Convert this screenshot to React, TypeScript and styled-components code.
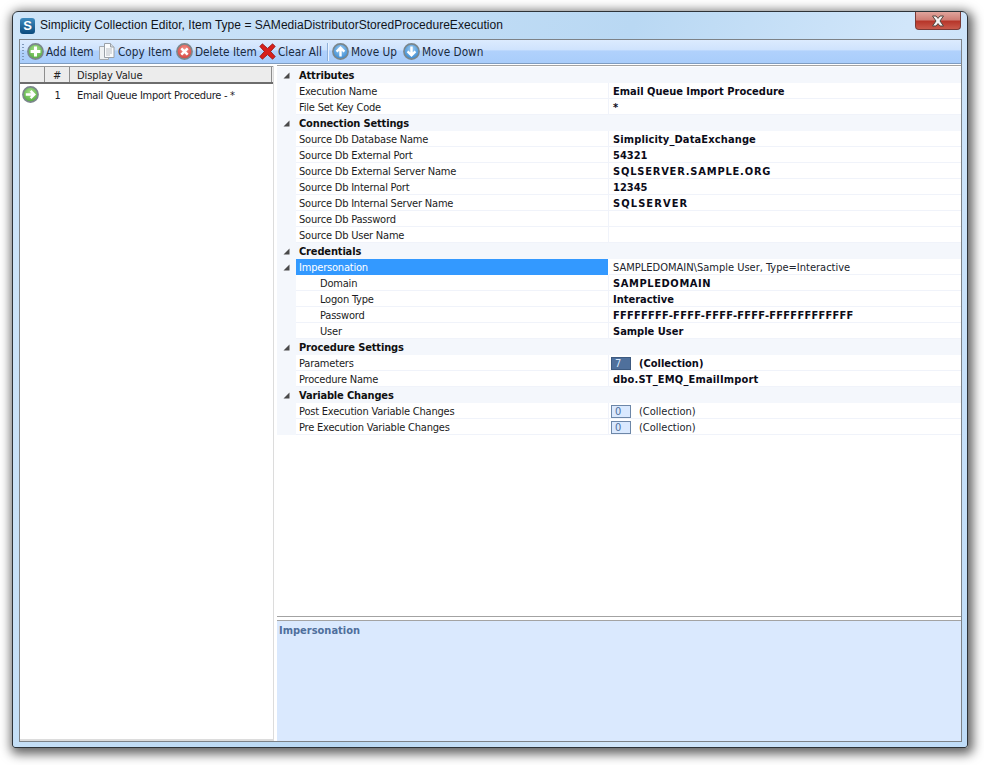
import React from 'react';
import styled, { createGlobalStyle } from 'styled-components';

const UI_FONT = '"Liberation Sans", Arial, sans-serif';
const GRID_FONT = '"DejaVu Sans Condensed", "DejaVu Sans", "Liberation Sans", sans-serif';

const GlobalStyle = createGlobalStyle`
  html, body {
    margin: 0;
    padding: 0;
    background: #ffffff;
  }
  body {
    width: 984px;
    height: 765px;
    overflow: hidden;
    font-family: ${GRID_FONT};
  }
`;

type Row =
  | { kind: 'category'; name: string }
  | {
      kind: 'prop';
      name: string;
      value?: string;
      bold?: boolean;
      nested?: boolean;
      selected?: boolean;
      expander?: boolean;
      collection?: string;
      modified?: boolean;
      track?: number;
    };

const ROWS: Row[] = [
  { kind: 'category', name: 'Attributes' },
  { kind: 'prop', name: 'Execution Name', value: 'Email Queue Import Procedure', bold: true },
  { kind: 'prop', name: 'File Set Key Code', value: '*', bold: true },
  { kind: 'category', name: 'Connection Settings' },
  { kind: 'prop', name: 'Source Db Database Name', value: 'Simplicity_DataExchange', bold: true, track: 0.13 },
  { kind: 'prop', name: 'Source Db External Port', value: '54321', bold: true },
  { kind: 'prop', name: 'Source Db External Server Name', value: 'SQLSERVER.SAMPLE.ORG', bold: true, track: 0.8 },
  { kind: 'prop', name: 'Source Db Internal Port', value: '12345', bold: true },
  { kind: 'prop', name: 'Source Db Internal Server Name', value: 'SQLSERVER', bold: true, track: 1.1 },
  { kind: 'prop', name: 'Source Db Password' },
  { kind: 'prop', name: 'Source Db User Name' },
  { kind: 'category', name: 'Credentials' },
  { kind: 'prop', name: 'Impersonation', value: 'SAMPLEDOMAIN\\Sample User, Type=Interactive', selected: true, expander: true },
  { kind: 'prop', name: 'Domain', value: 'SAMPLEDOMAIN', bold: true, nested: true, track: 0.6 },
  { kind: 'prop', name: 'Logon Type', value: 'Interactive', bold: true, nested: true },
  { kind: 'prop', name: 'Password', value: 'FFFFFFFF-FFFF-FFFF-FFFF-FFFFFFFFFFFF', bold: true, nested: true, track: 0.25 },
  { kind: 'prop', name: 'User', value: 'Sample User', bold: true, nested: true },
  { kind: 'category', name: 'Procedure Settings' },
  { kind: 'prop', name: 'Parameters', collection: '7', modified: true },
  { kind: 'prop', name: 'Procedure Name', value: 'dbo.ST_EMQ_EmailImport', bold: true, track: 0.18 },
  { kind: 'category', name: 'Variable Changes' },
  { kind: 'prop', name: 'Post Execution Variable Changes', collection: '0' },
  { kind: 'prop', name: 'Pre Execution Variable Changes', collection: '0' },
];

const Disc: React.FC<{ id: string; light: string; dark: string; children: React.ReactNode }> = ({ id, light, dark, children }) => (
  <svg width="17" height="17" viewBox="0 0 17 17">
    <defs>
      <radialGradient id={id} cx="50%" cy="35%" r="70%">
        <stop offset="0%" stopColor={light} />
        <stop offset="100%" stopColor={dark} />
      </radialGradient>
    </defs>
    <circle cx="8.5" cy="8.5" r="7.6" fill={`url(#${id})`} stroke="#7b878c" strokeWidth="1.6" />
    {children}
  </svg>
);

const AddIcon = () => (
  <Disc id="addDisc" light="#a6e08a" dark="#4fa83a">
    <path d="M8.5 3.6v9.8M3.6 8.5h9.8" stroke="#fff" strokeWidth="3" />
  </Disc>
);

const DeleteIcon = () => (
  <Disc id="delDisc" light="#f2918b" dark="#d23d36">
    <path d="M5.3 5.3l6.4 6.4M11.7 5.3l-6.4 6.4" stroke="#fff" strokeWidth="2.5" />
  </Disc>
);

const UpIcon = () => (
  <Disc id="upDisc" light="#9dcdf3" dark="#2f83cf">
    <path d="M8.5 13.5V5M4.6 8.6l3.9-3.9 3.9 3.9" fill="none" stroke="#fff" strokeWidth="2.4" />
  </Disc>
);

const DownIcon = () => (
  <Disc id="downDisc" light="#9dcdf3" dark="#2f83cf">
    <path d="M8.5 3.5V12M4.6 8.4l3.9 3.9 3.9-3.9" fill="none" stroke="#fff" strokeWidth="2.4" />
  </Disc>
);

const GoIcon = () => (
  <Disc id="goDisc" light="#a6e08a" dark="#4ba637">
    <path d="M3.8 8.5H12M8.6 4.8l3.7 3.7-3.7 3.7" fill="none" stroke="#fff" strokeWidth="2.4" />
  </Disc>
);

const CopyIcon = () => (
  <svg width="17" height="17" viewBox="0 0 17 17">
    <path d="M0.5 3.5h7l2 2v11h-9z" fill="#eef1f3" stroke="#a4aab0" />
    <path d="M5.5 0.5h6l3.5 3.5v10.5h-9.5z" fill="#fbfcfd" stroke="#9aa1a8" />
    <path d="M11.5 0.5v3.5h3.5" fill="#d8dde2" stroke="#9aa1a8" />
    <path d="M7 6h6M7 8h6M7 10h6M7 12h4" stroke="#b9bfc5" />
  </svg>
);

const ClearIcon = () => (
  <svg width="17" height="17" viewBox="0 0 17 17">
    <path
      d="M0.8 3.4L3.4 0.8 8.5 5.4 13.6 0.8 16.2 3.4 11.6 8.5 16.2 13.6 13.6 16.2 8.5 11.6 3.4 16.2 0.8 13.6 5.4 8.5z"
      fill="#d8201c"
      stroke="#8f1512"
      strokeWidth="0.8"
    />
  </svg>
);

const ExpandGlyph = () => (
  <svg width="7" height="7" viewBox="0 0 7 7">
    <path d="M6.5 0.5V6.5H0.5z" fill="#4a4a4a" />
  </svg>
);

const TOOLS: { label: string; icon: React.ReactNode; width: number }[] = [
  { label: 'Add Item', icon: <AddIcon />, width: 72 },
  { label: 'Copy Item', icon: <CopyIcon />, width: 77 },
  { label: 'Delete Item', icon: <DeleteIcon />, width: 83 },
  { label: 'Clear All', icon: <ClearIcon />, width: 68 },
];

const MOVES: { label: string; icon: React.ReactNode; width: number }[] = [
  { label: 'Move Up', icon: <UpIcon />, width: 71 },
  { label: 'Move Down', icon: <DownIcon />, width: 90 },
];

const App: React.FC = () => (
  <>
    <GlobalStyle />
    <Window>
      <TitleBar>
        <AppBadge>S</AppBadge>
        <TitleText>Simplicity Collection Editor, Item Type = SAMediaDistributorStoredProcedureExecution</TitleText>
        <CloseButton>
          <svg width="14" height="12" viewBox="0 0 14 12">
            <path d="M1.5 1H5l2 2.4L9 1h3.5L9 6l3.5 5H9L7 8.6 5 11H1.5L5 6z" fill="#f4f4f4" stroke="#51453f" strokeWidth="1" />
          </svg>
        </CloseButton>
      </TitleBar>
      <Frame>
        <Toolbar>
          <Grip />
          {TOOLS.map(tool => (
            <ToolButton key={tool.label} $width={tool.width}>
              {tool.icon}
              <span>{tool.label}</span>
            </ToolButton>
          ))}
          <ToolSeparator />
          {MOVES.map(tool => (
            <ToolButton key={tool.label} $width={tool.width}>
              {tool.icon}
              <span>{tool.label}</span>
            </ToolButton>
          ))}
        </Toolbar>
        <Panels>
          <ListPanel>
            <ListHeader>
              <HeaderCell $width={25} />
              <HeaderCell $width={25} $center>#</HeaderCell>
              <HeaderCell $width={202}>Display Value</HeaderCell>
            </ListHeader>
            <ListRow>
              <ListIcon><GoIcon /></ListIcon>
              <ListIndex>1</ListIndex>
              <ListValue>Email Queue Import Procedure - *</ListValue>
            </ListRow>
          </ListPanel>
          <PropertyPanel>
            <PropertyGrid>
              {ROWS.map(row =>
                row.kind === 'category' ? (
                  <CategoryRow key={row.name}>
                    <Gutter><ExpandGlyph /></Gutter>
                    <CategoryName>{row.name}</CategoryName>
                  </CategoryRow>
                ) : (
                  <PropRow key={row.name + row.nested}>
                    <Gutter>{row.expander && <ExpandGlyph />}</Gutter>
                    <PropName $nested={row.nested} $selected={row.selected}>{row.name}</PropName>
                    <PropValue $bold={row.bold || row.modified} $track={row.track}>
                      {row.collection ? (
                        <>
                          <Swatch $modified={row.modified}>{row.collection}</Swatch>
                          <span>(Collection)</span>
                        </>
                      ) : (
                        row.value
                      )}
                    </PropValue>
                  </PropRow>
                )
              )}
            </PropertyGrid>
            <Description>
              <DescriptionTitle>Impersonation</DescriptionTitle>
            </Description>
          </PropertyPanel>
        </Panels>
      </Frame>
    </Window>
  </>
);

const Window = styled.div`
  position: absolute;
  left: 12px;
  top: 11px;
  width: 956px;
  height: 737px;
  box-sizing: border-box;
  border: 1px solid #2e3338;
  border-radius: 6px 6px 3px 3px;
  background: linear-gradient(112deg, #cfe5f9 0%, #b9d8f3 50%, #d1e6fa 72%, #bfdcf8 100%);
  box-shadow: 2px 3px 11px 3px rgba(0, 0, 0, 0.62);
`;

const TitleBar = styled.div`
  display: flex;
  align-items: center;
  height: 26px;
  padding-left: 7px;
  position: relative;
`;

const AppBadge = styled.div`
  width: 15px;
  height: 16px;
  margin-top: 1px;
  border-radius: 3px;
  background: linear-gradient(180deg, #3f8cc0 0%, #0b4a7c 100%);
  color: #ffffff;
  font: bold 13px/16px ${UI_FONT};
  text-align: center;
`;

const TitleText = styled.div`
  margin-left: 5px;
  color: #10131a;
  font-family: ${UI_FONT};
  font-size: 12px;
  letter-spacing: 0.03px;
  white-space: nowrap;
`;

const CloseButton = styled.div`
  position: absolute;
  top: 0;
  left: 902px;
  width: 46px;
  height: 18px;
  box-sizing: border-box;
  display: flex;
  align-items: center;
  justify-content: center;
  border: 1px solid #7a3a36;
  border-top: none;
  border-radius: 0 0 4px 4px;
  background: linear-gradient(180deg, #e0a49c 0%, #cf7f76 45%, #b7362a 55%, #c95a4c 100%);
`;

const Frame = styled.div`
  position: absolute;
  left: 6px;
  top: 27px;
  width: 943px;
  height: 703px;
  box-sizing: border-box;
  border: 1px solid #7d8287;
  background: #ffffff;
`;

const Toolbar = styled.div`
  display: flex;
  align-items: center;
  height: 24px;
  box-sizing: border-box;
  border-bottom: 1px solid #7f9cc0;
  background: linear-gradient(180deg, #dcebfe 0%, #cfe3fd 42%, #b0d1fc 48%, #a9cdfb 100%);
`;

const Grip = styled.div`
  width: 2px;
  height: 16px;
  margin: 0 3px 0 2px;
  background: repeating-linear-gradient(180deg, #7d97b8 0 1px, transparent 1px 3px);
`;

const ToolButton = styled.div<{ $width: number }>`
  display: flex;
  align-items: center;
  gap: 2px;
  width: ${p => p.$width}px;
  flex: none;
  color: #1a2a3c;
  font-size: 11.7px;
  white-space: nowrap;
`;

const ToolSeparator = styled.div`
  width: 1px;
  height: 18px;
  margin: 0 3px 0 1px;
  background: #eaf3ff;
  box-shadow: -1px 0 0 #8fb0d8;
`;

const Panels = styled.div`
  display: flex;
  height: 677px;
`;

const ListPanel = styled.div`
  width: 254px;
  box-sizing: border-box;
  margin-top: 2px;
  border-right: 1px solid #dcdcdc;
  border-bottom: 2px solid #dcdcdc;
  background: #ffffff;
`;

const ListHeader = styled.div`
  display: flex;
  height: 18px;
  box-sizing: border-box;
  border-top: 1px solid #9a9a9a;
  border-bottom: 2px solid #6d6d6d;
  background: #ececec;
`;

const HeaderCell = styled.div<{ $width: number; $center?: boolean }>`
  width: ${p => p.$width}px;
  box-sizing: border-box;
  padding-left: ${p => (p.$center ? 0 : 7)}px;
  border-right: 1px solid #8d8d8d;
  color: #222222;
  font-size: 11px;
  letter-spacing: -0.1px;
  line-height: 17px;
  text-align: ${p => (p.$center ? 'center' : 'left')};
`;

const ListRow = styled.div`
  display: flex;
  align-items: center;
  height: 21px;
  font-size: 11px;
  letter-spacing: -0.28px;
  color: #1b1b26;
`;

const ListIcon = styled.div`
  width: 25px;
  padding-left: 2px;
  box-sizing: border-box;
  display: flex;
  align-items: center;
`;

const ListIndex = styled.div`
  width: 25px;
  margin-top: 2px;
  text-align: center;
`;

const ListValue = styled.div`
  margin-top: 2px;
  padding-left: 7px;
  white-space: nowrap;
`;

const PropertyPanel = styled.div`
  position: absolute;
  left: 257px;
  top: 25px;
  width: 684px;
  height: 676px;
  border-top: 1px solid #a3a3a3;
  display: flex;
  flex-direction: column;
  box-sizing: border-box;
  background: #ffffff;
`;

const PropertyGrid = styled.div`
  height: 551px;
  flex: none;
  padding-top: 1px;
  box-sizing: border-box;
  border-bottom: 1px solid #a3a3a3;
`;

const CategoryRow = styled.div`
  display: flex;
  height: 16px;
  background: #f4f7fc;
  box-sizing: border-box;
`;

const Gutter = styled.div`
  width: 19px;
  flex: none;
  padding: 5px 0 0 6px;
  box-sizing: border-box;
  background: #f4f7fc;
  display: flex;
  align-items: flex-start;
`;

const CategoryName = styled.div`
  padding-left: 3px;
  font-size: 11px;
  font-weight: bold;
  letter-spacing: -0.15px;
  line-height: 17px;
  color: #101010;
`;

const PropRow = styled.div`
  display: flex;
  height: 16px;
  background: #ffffff;
  box-shadow: inset 0 -1px 0 #f0f3fa;
  box-sizing: border-box;
`;

const PropName = styled.div<{ $nested?: boolean; $selected?: boolean }>`
  width: 313px;
  flex: none;
  box-sizing: border-box;
  padding-left: ${p => (p.$nested ? 24 : 3)}px;
  border-right: 1px solid ${p => (p.$selected ? '#ffffff' : '#f0f3fa')};
  background: ${p => (p.$selected ? '#3399ff' : 'transparent')};
  color: ${p => (p.$selected ? '#ffffff' : '#1c1c22')};
  font-size: 11px;
  letter-spacing: -0.2px;
  line-height: 18px;
  white-space: nowrap;
`;

const PropValue = styled.div<{ $bold?: boolean; $track?: number }>`
  padding-left: 4px;
  display: flex;
  align-items: center;
  gap: 8px;
  height: 17px;
  color: ${p => (p.$bold ? '#0b0b18' : '#20242c')};
  font-size: 11px;
  font-weight: ${p => (p.$bold ? 'bold' : 'normal')};
  letter-spacing: ${p => p.$track ?? 0}px;
  white-space: nowrap;
`;

const Swatch = styled.span<{ $modified?: boolean }>`
  width: 20px;
  height: 13px;
  margin: 0 0 0 -2px;
  box-sizing: border-box;
  border: 1px solid ${p => (p.$modified ? '#3d5a80' : '#6d87a8')};
  background: ${p => (p.$modified ? '#4f709c' : '#dae9fe')};
  color: ${p => (p.$modified ? '#dbe8fb' : '#4f709c')};
  font-size: 11px;
  font-weight: normal;
  line-height: 11px;
  padding-left: 3px;
`;

const Description = styled.div`
  flex: 1;
  margin-top: 3px;
  border-top: 1px solid #a3a3a3;
  background: #dae9fe;
  padding: 2px 0 0 2px;
`;

const DescriptionTitle = styled.div`
  color: #4f6f9c;
  font-size: 11px;
  font-weight: bold;
  line-height: 16px;
`;

export default App;
